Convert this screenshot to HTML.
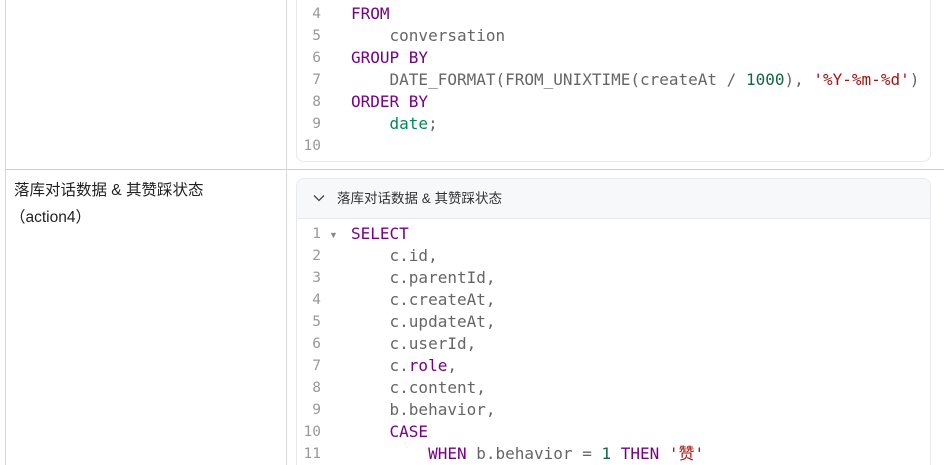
<!DOCTYPE html>
<html style="overflow:hidden;height:465px"><head><meta charset="utf-8"><style>
body{margin:0;width:944px;height:465px;overflow:hidden;background:#fff;font-family:"Liberation Sans","Noto Sans CJK SC",sans-serif;position:relative}
.vl{position:absolute;top:0;height:465px;width:1px;background:#d8d8d8}
.hl{position:absolute;height:1px;background:#d0d0d0}
.box{position:absolute;left:296px;width:633px;border:1px solid #e8e9ed;border-radius:8px;overflow:hidden;background:#fff}
.code{position:absolute;font-family:"DejaVu Sans Mono","Liberation Mono",monospace;font-size:16px;line-height:22px;color:#666;white-space:pre}
.ln{position:absolute;font-family:"DejaVu Sans Mono","Liberation Mono",monospace;font-size:14.5px;line-height:22px;color:#999;white-space:pre;text-align:right;width:26px}
.k{color:#770088}.n{color:#116644}.s{color:#aa1111}.v{color:#008855}
.lab{position:absolute;left:14px;font-size:15.5px;color:#222;line-height:28px}
</style></head><body>
<div class="vl" style="left:5px"></div>
<div class="vl" style="left:286px"></div>
<div class="hl" style="left:5px;right:0;top:169px"></div>
<div class="box" style="top:-10px;height:170px"></div>
<div class="ln" style="left:295px;top:3px">4
5
6
7
8
9
10</div>
<div class="code" style="left:351px;top:3px"><span class="k">FROM</span>
    conversation
<span class="k">GROUP BY</span>
    DATE_FORMAT(FROM_UNIXTIME(createAt / <span class="n">1000</span>), <span class="s">'%Y-%m-%d'</span>)
<span class="k">ORDER BY</span>
    <span class="v">date</span>;
</div>
<div class="lab" style="top:177px">落库对话数据 &amp; 其赞踩状态</div>
<div class="lab" style="top:204px;left:10px">（action4）</div>
<div class="box" style="top:178px;height:295px">
<div style="height:39px;background:#f7f8fa;border-bottom:1px solid #e8e9ed;font-size:13.5px;color:#333;line-height:39px;padding-left:40px;position:relative">
<svg style="position:absolute;left:16px;top:15px" width="12" height="8" viewBox="0 0 12 8"><path d="M1 1.5L6 6.5L11 1.5" fill="none" stroke="#444" stroke-width="1.3"/></svg>落库对话数据 &amp; 其赞踩状态</div>
</div>
<div class="ln" style="left:295px;top:223px">1
2
3
4
5
6
7
8
9
10
11</div>
<div style="position:absolute;left:329px;top:230px;font-size:9px;color:#888">▼</div>
<div class="code" style="left:351px;top:223px"><span class="k">SELECT</span>
    c.id,
    c.parentId,
    c.createAt,
    c.updateAt,
    c.userId,
    c.<span class="k">role</span>,
    c.content,
    b.behavior,
    <span class="k">CASE</span>
        <span class="k">WHEN</span> b.behavior = <span class="n">1</span> <span class="k">THEN</span> <span class="s">'赞'</span></div>
</body></html>
